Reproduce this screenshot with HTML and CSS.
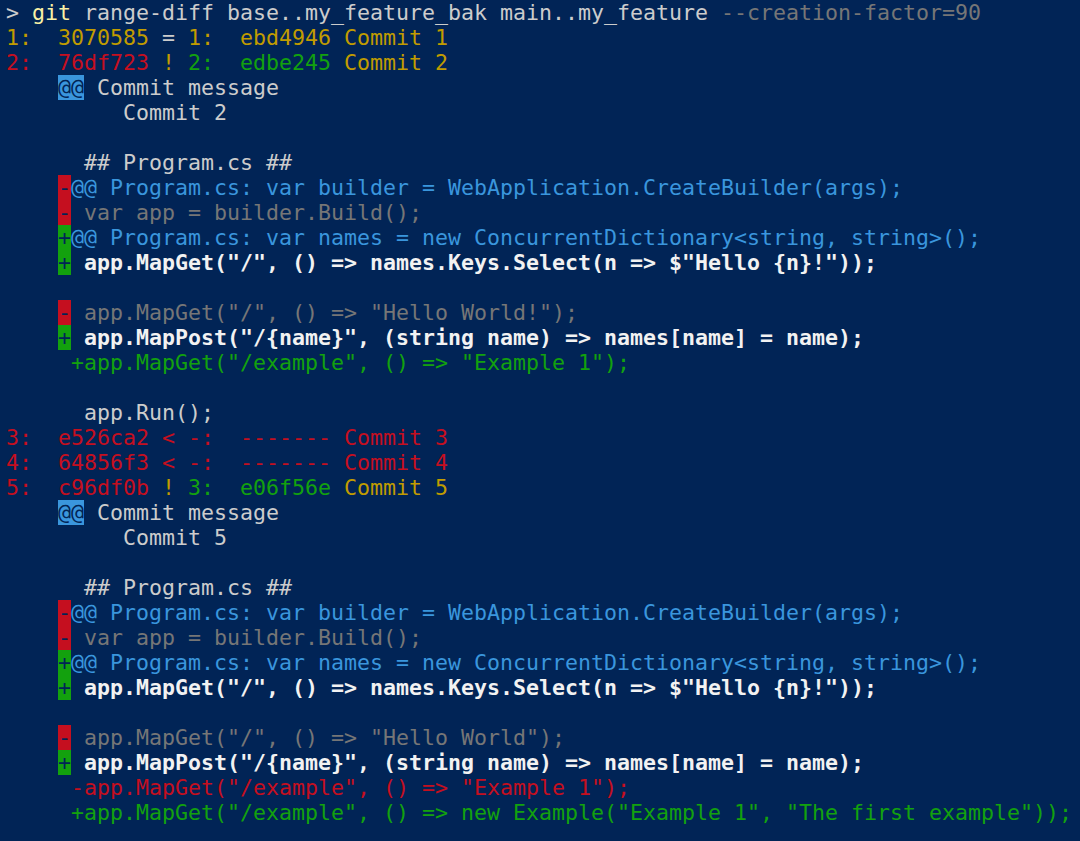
FILE: index.html
```html
<!DOCTYPE html>
<html lang="en">
<head>
<meta charset="utf-8">
<title>git range-diff</title>
<link rel="stylesheet" href="styles.css">
</head>
<body>
<pre class="term"><span class="fg">&gt; </span><span class="byel">git</span><span class="fg"> range-diff base..my_feature_bak main..my_feature</span> <span class="gray">--creation-factor=90</span>
<span class="yel">1:  3070585</span> <span class="fg">=</span> <span class="yel">1:  ebd4946</span> <span class="yel">Commit 1</span>
<span class="red">2:  76df723</span> <span class="yel">!</span> <span class="grn">2:  edbe245</span> <span class="yel">Commit 2</span>
    <span class="rev-blue">@@</span><span class="fg"> Commit message</span>
<span class="fg">         Commit 2</span>

<span class="fg">      ## Program.cs ##</span>
    <span class="rev-red">-</span><span class="blue">@@ Program.cs: var builder = WebApplication.CreateBuilder(args);</span>
    <span class="rev-red">-</span><span class="gray"> var app = builder.Build();</span>
    <span class="rev-grn">+</span><span class="blue">@@ Program.cs: var names = new ConcurrentDictionary&lt;string, string&gt;();</span>
    <span class="rev-grn">+</span><span class="bwhite"> app.MapGet("/", () =&gt; names.Keys.Select(n =&gt; $"Hello {n}!"));</span>

    <span class="rev-red">-</span><span class="gray"> app.MapGet("/", () =&gt; "Hello World!");</span>
    <span class="rev-grn">+</span><span class="bwhite"> app.MapPost("/{name}", (string name) =&gt; names[name] = name);</span>
     <span class="grn">+app.MapGet("/example", () =&gt; "Example 1");</span>

<span class="fg">      app.Run();</span>
<span class="red">3:  e526ca2 &lt; -:  ------- Commit 3</span>
<span class="red">4:  64856f3 &lt; -:  ------- Commit 4</span>
<span class="red">5:  c96df0b</span> <span class="yel">!</span> <span class="grn">3:  e06f56e</span> <span class="yel">Commit 5</span>
    <span class="rev-blue">@@</span><span class="fg"> Commit message</span>
<span class="fg">         Commit 5</span>

<span class="fg">      ## Program.cs ##</span>
    <span class="rev-red">-</span><span class="blue">@@ Program.cs: var builder = WebApplication.CreateBuilder(args);</span>
    <span class="rev-red">-</span><span class="gray"> var app = builder.Build();</span>
    <span class="rev-grn">+</span><span class="blue">@@ Program.cs: var names = new ConcurrentDictionary&lt;string, string&gt;();</span>
    <span class="rev-grn">+</span><span class="bwhite"> app.MapGet("/", () =&gt; names.Keys.Select(n =&gt; $"Hello {n}!"));</span>

    <span class="rev-red">-</span><span class="gray"> app.MapGet("/", () =&gt; "Hello World");</span>
    <span class="rev-grn">+</span><span class="bwhite"> app.MapPost("/{name}", (string name) =&gt; names[name] = name);</span>
     <span class="red">-app.MapGet("/example", () =&gt; "Example 1");</span>
     <span class="grn">+app.MapGet("/example", () =&gt; new Example("Example 1", "The first example"));</span></pre>
</body>
</html>
```

FILE: styles.css
```css
html, body {
  margin: 0;
  padding: 0;
  background: #012456;
  height: 100%;
  overflow: hidden;
}

.term {
  margin: 0;
  padding: 0 6px;
  font-family: "DejaVu Sans Mono", "Liberation Mono", monospace;
  font-size: 21.6px;
  line-height: 25px;
  color: #cccccc;
  white-space: pre;
}

.fg { color: #cccccc; }
.byel { color: #f9f1a5; }
.yel { color: #c19c00; }
.red { color: #c50f1f; }
.grn { color: #13a10e; }
.blue { color: #3a96dd; }
.gray { color: #767676; }
.bwhite { color: #f2f2f2; font-weight: bold; }

.rev-blue { background: #3a96dd; color: #012456; }
.rev-red { background: #c50f1f; color: #012456; }
.rev-grn { background: #13a10e; color: #012456; }
```
